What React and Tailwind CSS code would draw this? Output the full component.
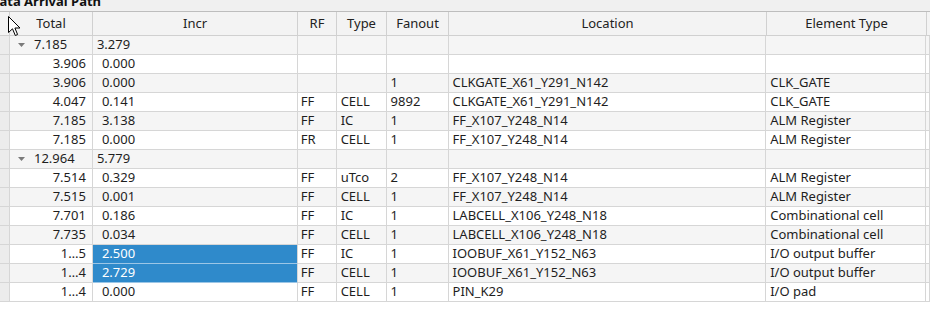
import React from 'react';

// Data Arrival Path table
const COLS = [
  { key: 'gutter', w: 'w-[10px]' },
  { key: 'total', w: 'w-[83px]', label: 'Total' },
  { key: 'incr', w: 'w-[205px]', label: 'Incr' },
  { key: 'rf', w: 'w-[39px]', label: 'RF' },
  { key: 'type', w: 'w-[50px]', label: 'Type' },
  { key: 'fanout', w: 'w-[62px]', label: 'Fanout' },
  { key: 'loc', w: 'w-[318px]', label: 'Location' },
  { key: 'elem', w: 'w-[160px]', label: 'Element Type' },
  { key: 'rest', w: 'w-[4px]' },
];

const ROWS = [
  { group: true, total: '7.185', incr: '3.279' },
  { total: '3.906', incr: '0.000' },
  { total: '3.906', incr: '0.000', fanout: '1', loc: 'CLKGATE_X61_Y291_N142', elem: 'CLK_GATE' },
  { total: '4.047', incr: '0.141', rf: 'FF', type: 'CELL', fanout: '9892', loc: 'CLKGATE_X61_Y291_N142', elem: 'CLK_GATE' },
  { total: '7.185', incr: '3.138', rf: 'FF', type: 'IC', fanout: '1', loc: 'FF_X107_Y248_N14', elem: 'ALM Register' },
  { total: '7.185', incr: '0.000', rf: 'FR', type: 'CELL', fanout: '1', loc: 'FF_X107_Y248_N14', elem: 'ALM Register' },
  { group: true, total: '12.964', incr: '5.779' },
  { total: '7.514', incr: '0.329', rf: 'FF', type: 'uTco', fanout: '2', loc: 'FF_X107_Y248_N14', elem: 'ALM Register' },
  { total: '7.515', incr: '0.001', rf: 'FF', type: 'CELL', fanout: '1', loc: 'FF_X107_Y248_N14', elem: 'ALM Register' },
  { total: '7.701', incr: '0.186', rf: 'FF', type: 'IC', fanout: '1', loc: 'LABCELL_X106_Y248_N18', elem: 'Combinational cell' },
  { total: '7.735', incr: '0.034', rf: 'FF', type: 'CELL', fanout: '1', loc: 'LABCELL_X106_Y248_N18', elem: 'Combinational cell' },
  { total: '1…5', incr: '2.500', sel: true, rf: 'FF', type: 'IC', fanout: '1', loc: 'IOOBUF_X61_Y152_N63', elem: 'I/O output buffer' },
  { total: '1…4', incr: '2.729', sel: true, rf: 'FF', type: 'CELL', fanout: '1', loc: 'IOOBUF_X61_Y152_N63', elem: 'I/O output buffer' },
  { total: '1…4', incr: '0.000', rf: 'FF', type: 'CELL', fanout: '1', loc: 'PIN_K29', elem: 'I/O pad' },
];

const Caret = () => (
  <svg width="7" height="4" viewBox="0 0 7 4" className="shrink-0">
    <path d="M0 0 L7 0 L3.5 4 Z" fill="#7a7a7a" />
  </svg>
);

const Cursor = () => (
  <svg width="13" height="21" viewBox="0 0 13 21" className="absolute left-[8px] top-[16px]">
    <path d="M0.5 0.5 L0.5 16.5 L4.5 12.8 L7.3 19.5 L9.6 18.5 L6.9 12 L12 12 Z" fill="#fff" stroke="#000" strokeWidth="1" strokeLinejoin="round" />
  </svg>
);

function Row({ r, i }) {
  const bg = i % 2 === 0 ? 'bg-[#f5f5f5]' : 'bg-white';
  const cell = 'h-[19px] border-r border-b border-[#d6d6d6] flex items-center overflow-hidden whitespace-nowrap';
  return (
    <div className={`flex ${bg}`}>
      <div className={`${cell} w-[10px] bg-[#ececec]`} />
      {r.group ? (
        <div className={`${cell} w-[83px] pl-[8px] gap-[9px]`}>
          <Caret />
          <span>{r.total}</span>
        </div>
      ) : (
        <div className={`${cell} w-[83px] justify-end pr-[6px]`}>{r.total}</div>
      )}
      <div
        className={`${cell} w-[205px] ${r.group ? 'pl-[4px]' : 'pl-[9px]'} ${
          r.sel ? 'bg-[#2f8acb] text-white border-b-[#9cc6e6]' : ''
        }`}
      >
        {r.incr}
      </div>
      <div className={`${cell} w-[39px] pl-[3px]`}>{r.rf}</div>
      <div className={`${cell} w-[50px] pl-[4px]`}>{r.type}</div>
      <div className={`${cell} w-[62px] pl-[4px]`}>{r.fanout}</div>
      <div className={`${cell} w-[318px] pl-[4px]`}>{r.loc}</div>
      <div className={`${cell} w-[160px] pl-[4px]`}>{r.elem}</div>
      <div className={`${cell} w-[4px]`} />
    </div>
  );
}

export default function App() {
  return (
    <div className="relative w-[930px] h-[310px] overflow-hidden bg-white text-[13px] text-[#1e1e1e] font-['Noto_Sans',sans-serif]">
      {/* title strip, mostly scrolled out of view */}
      <div className="h-[12px] bg-[#f0f0f0] border-b border-[#bdbdbd] overflow-hidden">
        <div className="-mt-[8px] -ml-[10px] font-bold text-[13px] leading-[18px] text-[#111]">Data Arrival Path</div>
      </div>

      {/* header */}
      <div className="flex bg-[#f3f3f3]">
        {COLS.map((c) => (
          <div
            key={c.key}
            className={`${c.w} h-[24px] shrink-0 border-r border-b border-[#d0d0d0] flex items-center justify-center text-[#222] whitespace-nowrap`}
          >
            {c.label}
          </div>
        ))}
      </div>

      {ROWS.map((r, i) => (
        <Row key={i} r={r} i={i} />
      ))}

      <Cursor />
    </div>
  );
}
